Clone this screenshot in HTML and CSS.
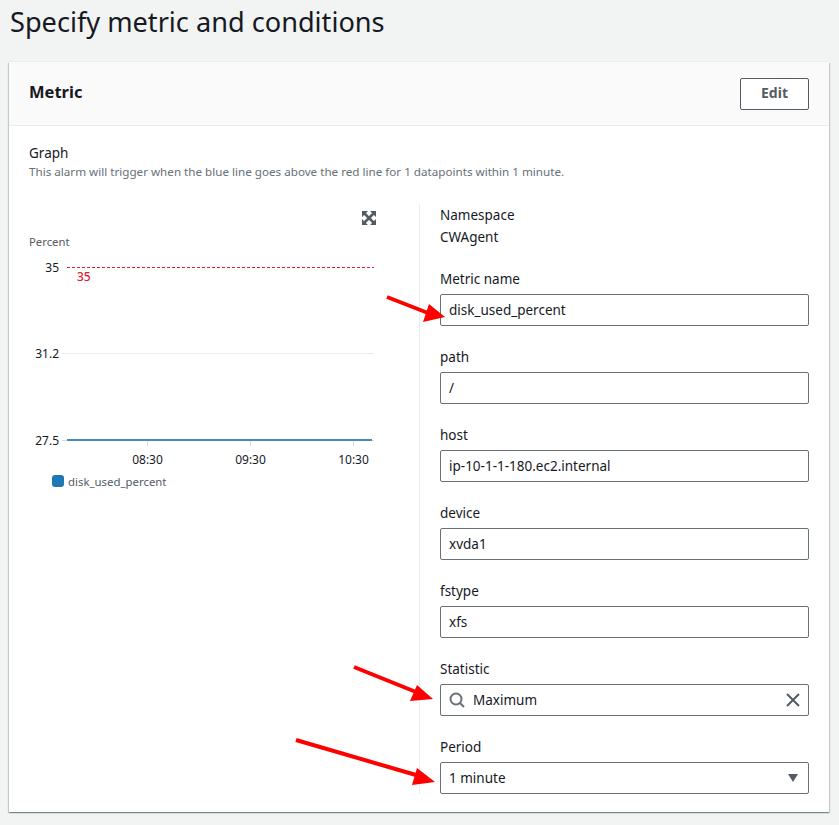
FILE: index.html
```html
<!DOCTYPE html>
<html lang="en">

<head>
    <meta charset="UTF-8">
    <meta name="viewport" content="width=device-width, initial-scale=1.0">
    <title>Specify metric and conditions</title>
    <link rel="stylesheet" href="styles.css">
</head>

<body>

    <h1 class="page-title">Specify metric and conditions</h1>

    <section class="card">
        <header class="card-header">
            <h2>Metric</h2>
            <button class="edit-button">Edit</button>
        </header>

        <div class="card-body">
            <div class="graph-title">Graph</div>
            <div class="graph-note">This alarm will trigger when the blue line goes above the red line for 1 datapoints within 1 minute.</div>

            <div class="columns">
                <div class="chart-column">
                    <svg class="chart" width="390" height="300" viewBox="0 0 390 300">
                        <!-- expand icon -->
                        <path d="M333 6h6l-6 6zM347 6h-6l6 6zM333 20h6l-6-6zM347 20h-6l6-6z" fill="#545b64" />
                        <path d="M335 8l10 10M345 8l-10 10" stroke="#545b64" stroke-width="2.500" />

                        <text class="axis-name" x="0" y="41">Percent</text>

                        <text class="axis-label" x="30" y="67" text-anchor="end">35</text>
                        <line x1="38" y1="62.5" x2="345" y2="62.5" stroke="#d9232e" stroke-dasharray="3 2" />
                        <text class="limit-label" x="48" y="76">35</text>

                        <text class="axis-label" x="30" y="153" text-anchor="end">31.2</text>
                        <line x1="33" y1="148.5" x2="345" y2="148.5" stroke="#e9ebed" />

                        <text class="axis-label" x="30" y="240" text-anchor="end">27.5</text>
                        <line x1="33" y1="235.5" x2="345" y2="235.5" stroke="#d5dbdb" />
                        <line x1="38" y1="235" x2="343" y2="235" stroke="#4a8ab8" stroke-width="2" />

                        <line x1="118.5" y1="236" x2="118.5" y2="241" stroke="#d5dbdb" />
                        <line x1="221.5" y1="236" x2="221.5" y2="241" stroke="#d5dbdb" />
                        <line x1="324.5" y1="236" x2="324.5" y2="241" stroke="#d5dbdb" />
                        <text class="axis-label" x="118.5" y="259" text-anchor="middle">08:30</text>
                        <text class="axis-label" x="221.5" y="259" text-anchor="middle">09:30</text>
                        <text class="axis-label" x="324.5" y="259" text-anchor="middle">10:30</text>

                        <rect x="23" y="270" width="12" height="12" rx="3" fill="#1f77b4" />
                        <text class="legend-label" x="39" y="281">disk_used_percent</text>
                    </svg>
                </div>

                <div class="fields">
                    <div class="static-field">
                        <div>Namespace</div>
                        <div>CWAgent</div>
                    </div>

                    <div class="field">
                        <label>Metric name</label>
                        <div class="input">disk_used_percent</div>
                    </div>
                    <div class="field">
                        <label>path</label>
                        <div class="input">/</div>
                    </div>
                    <div class="field">
                        <label>host</label>
                        <div class="input">ip-10-1-1-180.ec2.internal</div>
                    </div>
                    <div class="field">
                        <label>device</label>
                        <div class="input">xvda1</div>
                    </div>
                    <div class="field">
                        <label>fstype</label>
                        <div class="input">xfs</div>
                    </div>
                    <div class="field">
                        <label>Statistic</label>
                        <div class="input search-input">
                            <svg width="16" height="16" viewBox="0 0 16 16" fill="none" stroke="#687078" stroke-width="2">
                                <circle cx="7" cy="7" r="5.5" />
                                <path d="M11 11l4 4" />
                            </svg>
                            <span class="input-text">Maximum</span>
                            <svg width="14" height="14" viewBox="0 0 14 14" fill="none" stroke="#545b64" stroke-width="2">
                                <path d="M1 1l12 12M13 1L1 13" />
                            </svg>
                        </div>
                    </div>
                    <div class="field">
                        <label>Period</label>
                        <div class="input select-input">
                            <span class="input-text">1 minute</span>
                            <svg width="10" height="8" viewBox="0 0 10 8">
                                <path d="M0 0h10L5 8z" fill="#545b64" />
                            </svg>
                        </div>
                    </div>
                </div>
            </div>
        </div>
    </section>

    <!-- red arrows drawn on top of the screenshot -->
    <svg class="arrows" width="839" height="825" viewBox="0 0 839 825">
        <path d="M387 297L428 313" stroke="#f00" stroke-width="4" />
        <path d="M445 317L429 304L423 322z" fill="#f00" />
        <path d="M354 667L416 692" stroke="#f00" stroke-width="4" />
        <path d="M433 699L417 685L410 701z" fill="#f00" />
        <path d="M296 740L416 775" stroke="#f00" stroke-width="4" />
        <path d="M435 782L417 768L412 785z" fill="#f00" />
    </svg>

</body>

</html>
```

FILE: styles.css
```css
body {
    font-family: "Noto Sans", Arial, sans-serif;
    font-size: 13.5px;
    margin: 0;
    padding: 0;
    background-color: #f2f3f3;
    color: #16191f;
    position: relative;
    height: 825px;
    overflow: hidden;
}

.page-title {
    font-size: 27.150px;
    font-weight: 400;
    line-height: 32px;
    margin: 0;
    padding: 6px 0 24px 10px;
}

.card {
    margin: 0 10px 0 9px;
    background-color: white;
    box-shadow: 0 1px 1px 0 rgba(0, 28, 36, 0.3), 1px 1px 1px 0 rgba(0, 28, 36, 0.15), -1px 1px 1px 0 rgba(0, 28, 36, 0.15), 0 -1px 0 0 #eaeded;
}

.card-header {
    display: flex;
    justify-content: space-between;
    align-items: center;
    height: 63px;
    padding: 0 20px;
    background-color: #fafafa;
    border-bottom: 1px solid #eaeded;
}

.card-header h2 {
    font-size: 16.500px;
    font-weight: 700;
    line-height: 20px;
    margin: 0 0 3px 0;
}

.edit-button {
    width: 69px;
    height: 32px;
    padding: 0 0 2px 0;
    font-family: inherit;
    font-size: 14px;
    font-weight: 700;
    color: #545b64;
    background-color: white;
    border: 1px solid #545b64;
    border-radius: 2px;
}

.card-body {
    padding: 18px 20px 18px 20px;
}

.graph-title {
    line-height: 18px;
}

.graph-note {
    font-size: 11.650px;
    line-height: 19px;
    color: #687078;
}

.columns {
    display: flex;
    margin-top: 23px;
}

.chart-column {
    width: 390px;
    flex: none;
    border-right: 1px solid #eaeded;
}

.chart {
    display: block;
    margin-top: 1px;
}

.axis-name {
    font-size: 11.300px;
    fill: #545b64;
}

.axis-label {
    font-size: 12px;
    fill: #16191f;
}

.limit-label {
    font-size: 12px;
    font-weight: 500;
    fill: #d9232e;
}

.legend-label {
    font-size: 11.400px;
    fill: #545b64;
}

.fields {
    flex: 1;
    padding-left: 20px;
}

.static-field {
    line-height: 22px;
}

.field {
    margin-top: 22px;
}

.field label {
    display: block;
    line-height: 18px;
    margin-bottom: 6px;
}

.input {
    box-sizing: border-box;
    display: flex;
    align-items: center;
    height: 32px;
    padding: 0 8px;
    background-color: white;
    border: 1px solid #687078;
    border-radius: 2px;
}

.search-input {
    gap: 8px;
}

.input-text {
    flex: 1;
}

.select-input svg {
    margin-right: 2px;
}

.arrows {
    position: absolute;
    top: 0;
    left: 0;
    pointer-events: none;
}
```
